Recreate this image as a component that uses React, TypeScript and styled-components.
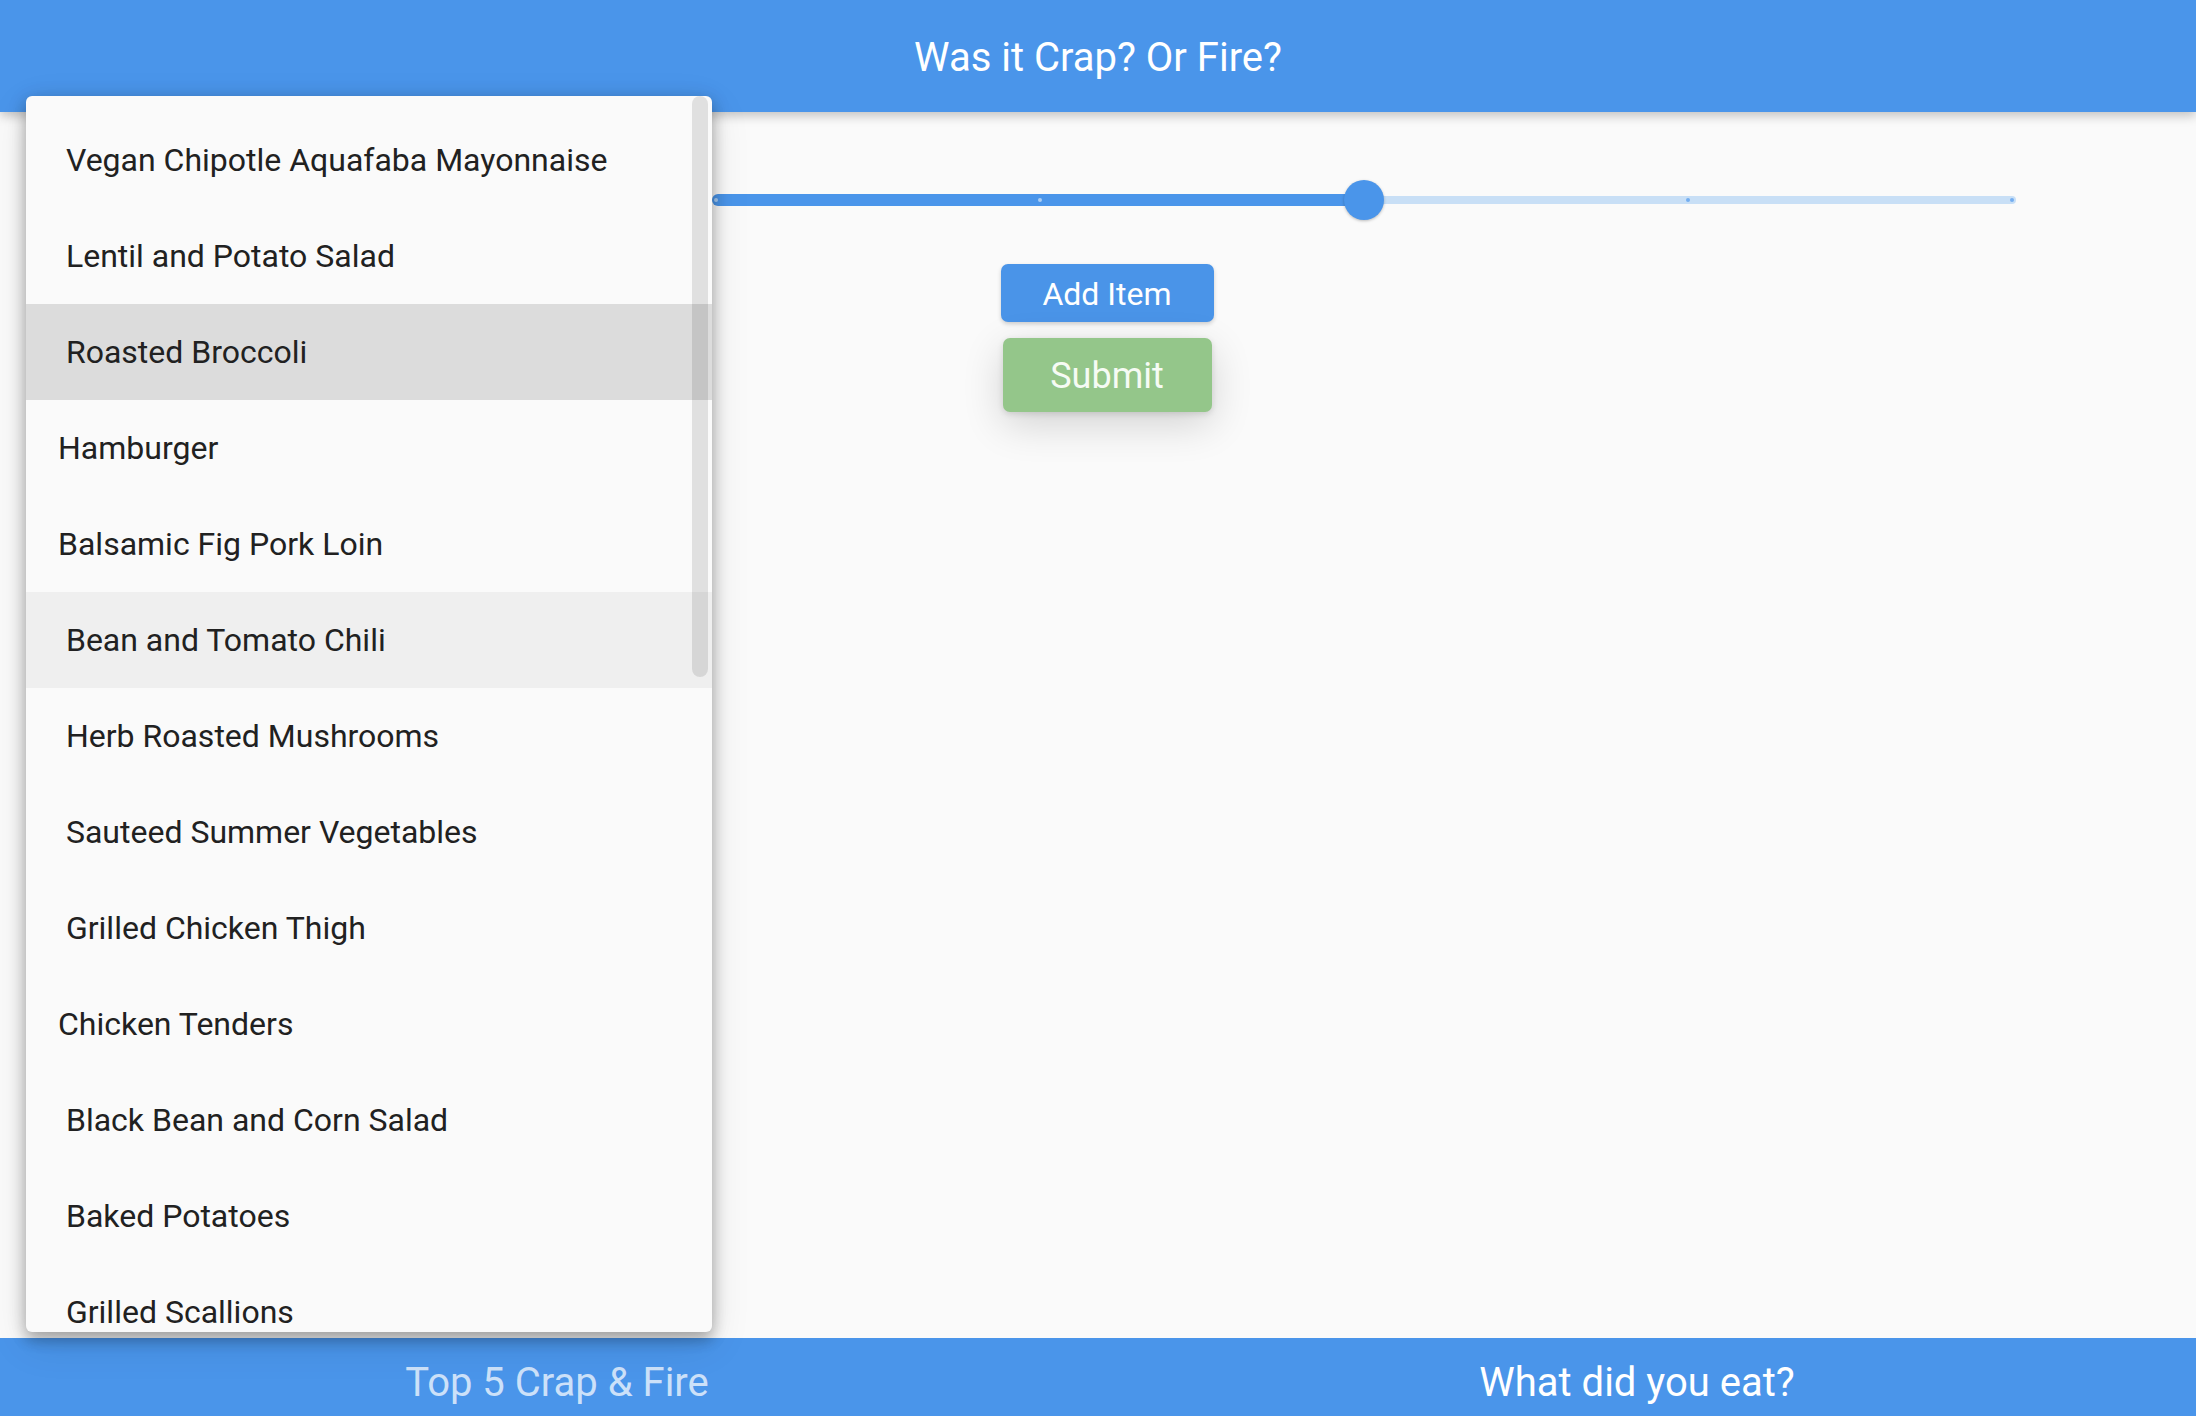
import * as React from "react";
import styled, { createGlobalStyle } from "styled-components";

const blue = "#4a95ea";
const green = "#94c68a";
const font = `Roboto, "Noto Sans", "Liberation Sans", sans-serif`;

const GlobalStyle = createGlobalStyle`
	html, body {
		margin: 0;
		padding: 0;
		background: #fafafa;
		font-family: ${font};
	}
	* {
		box-sizing: border-box;
	}
`

const Page = styled.div`
	position: relative;
	display: flex;
	flex-direction: column;
	width: 2196px;
	height: 1416px;
	overflow: hidden;
	background: #fafafa;
`

const Header = styled.header`
	position: relative;
	z-index: 2;
	flex: 0 0 112px;
	display: flex;
	align-items: center;
	justify-content: center;
	padding-top: 3px;
	background: ${blue};
	box-shadow: 0 4px 10px rgba(0, 0, 0, 0.22);
	color: #fff;
	font-size: 40px;
	font-weight: 400;
`

const Main = styled.main`
	flex: 1;
	display: flex;
	flex-direction: column;
	padding-top: 68px;
`

const SliderWrap = styled.div`
	position: relative;
	margin-left: 712px;
	width: 1304px;
	height: 40px;
	display: flex;
	align-items: center;
`

const Track = styled.div<{ $active?: boolean }>`
	height: ${p => p.$active ? "12px" : "8px"};
	background: ${p => p.$active ? blue : "#c8dff6"};
	border-radius: ${p => p.$active ? "6px 0 0 6px" : "0 4px 4px 0"};
`

const Tick = styled.span<{ $active?: boolean }>`
	position: absolute;
	top: 18px;
	width: 4px;
	height: 4px;
	margin-left: -2px;
	border-radius: 50%;
	background: ${p => p.$active ? "#a9cdf5" : "#74aef0"};
`

const Thumb = styled.span`
	position: absolute;
	top: 0;
	width: 40px;
	height: 40px;
	margin-left: -20px;
	border-radius: 50%;
	background: ${blue};
	box-shadow: 0 1px 3px rgba(0, 0, 0, 0.25);
`

const ButtonColumn = styled.div`
	display: flex;
	flex-direction: column;
	align-items: center;
	gap: 16px;
	margin-top: 44px;
	padding-left: 18px;
`

const Button = styled.button<{ $kind: "add" | "submit" }>`
	border: none;
	border-radius: 7px;
	font-family: ${font};
	cursor: pointer;
	color: ${p => p.$kind === "add" ? "#fff" : "#f6fbf4"};
	background: ${p => p.$kind === "add" ? "#4a94e8" : green};
	height: ${p => p.$kind === "add" ? "58px" : "74px"};
	width: ${p => p.$kind === "add" ? "213px" : "209px"};
	font-size: ${p => p.$kind === "add" ? "32px" : "36px"};
	padding-top: 2px;
	box-shadow: ${p => p.$kind === "add"
		? "0 2px 4px rgba(0, 0, 0, 0.18)"
		: "0 12px 40px rgba(0, 0, 0, 0.16), 0 2px 6px rgba(0, 0, 0, 0.12)"};
`

const Footer = styled.nav`
	position: relative;
	z-index: 1;
	flex: 0 0 78px;
	display: grid;
	grid-template-columns: 1fr 1fr;
	padding: 0 19px 0 17px;
	background: ${blue};
`

const Tab = styled.div<{ $active?: boolean }>`
	display: flex;
	align-items: center;
	justify-content: center;
	font-size: 40px;
	color: ${p => p.$active ? "#fff" : "rgba(255, 255, 255, 0.72)"};
	padding-top: 10px;
`

const Menu = styled.div`
	position: absolute;
	z-index: 5;
	left: 26px;
	top: 96px;
	width: 686px;
	height: 1236px;
	overflow: hidden;
	padding-top: 16px;
	background: #fafafa;
	border-radius: 6px;
	box-shadow: 0 8px 14px rgba(0, 0, 0, 0.22), 0 3px 20px rgba(0, 0, 0, 0.14), 0 12px 40px rgba(0, 0, 0, 0.1);
`

const Row = styled.div<{ $state?: "selected" | "hover" }>`
	height: 96px;
	display: flex;
	align-items: center;
	padding-left: 32px;
	font-size: 32px;
	color: #212121;
	white-space: pre;
	background: ${p => p.$state === "selected" ? "#dcdcdc" : p.$state === "hover" ? "#efefef" : "transparent"};
`

const ScrollThumb = styled.div`
	position: absolute;
	top: 0;
	right: 4px;
	width: 16px;
	height: 581px;
	border-radius: 8px;
	background: rgba(0, 0, 0, 0.1);
`

const items: { label: string; state?: "selected" | "hover" }[] = [
	{ label: " Vegan Chipotle Aquafaba Mayonnaise" },
	{ label: " Lentil and Potato Salad" },
	{ label: " Roasted Broccoli", state: "selected" },
	{ label: "Hamburger" },
	{ label: "Balsamic Fig Pork Loin" },
	{ label: " Bean and Tomato Chili", state: "hover" },
	{ label: " Herb Roasted Mushrooms" },
	{ label: " Sauteed Summer Vegetables" },
	{ label: " Grilled Chicken Thigh" },
	{ label: "Chicken Tenders" },
	{ label: " Black Bean and Corn Salad" },
	{ label: " Baked Potatoes" },
	{ label: " Grilled Scallions" },
]

const ticks = [4, 328, 652, 976, 1300];
const value = 652;

export default function App() {
	return (
		<Page>
			<GlobalStyle />
			<Header>Was it Crap? Or Fire?</Header>
			<Main>
				<SliderWrap>
					<Track $active style={{ width: value }} />
					<Track style={{ flex: 1 }} />
					{ticks.map(t => (
						<Tick key={t} $active={t <= value} style={{ left: t }} />
					))}
					<Thumb style={{ left: value }} />
				</SliderWrap>
				<ButtonColumn>
					<Button $kind="add">Add Item</Button>
					<Button $kind="submit">Submit</Button>
				</ButtonColumn>
			</Main>
			<Footer>
				<Tab>Top 5 Crap &amp; Fire</Tab>
				<Tab $active>What did you eat?</Tab>
			</Footer>
			<Menu>
				{items.map(item => (
					<Row key={item.label} $state={item.state}>{item.label}</Row>
				))}
				<ScrollThumb />
			</Menu>
		</Page>
	)
}
